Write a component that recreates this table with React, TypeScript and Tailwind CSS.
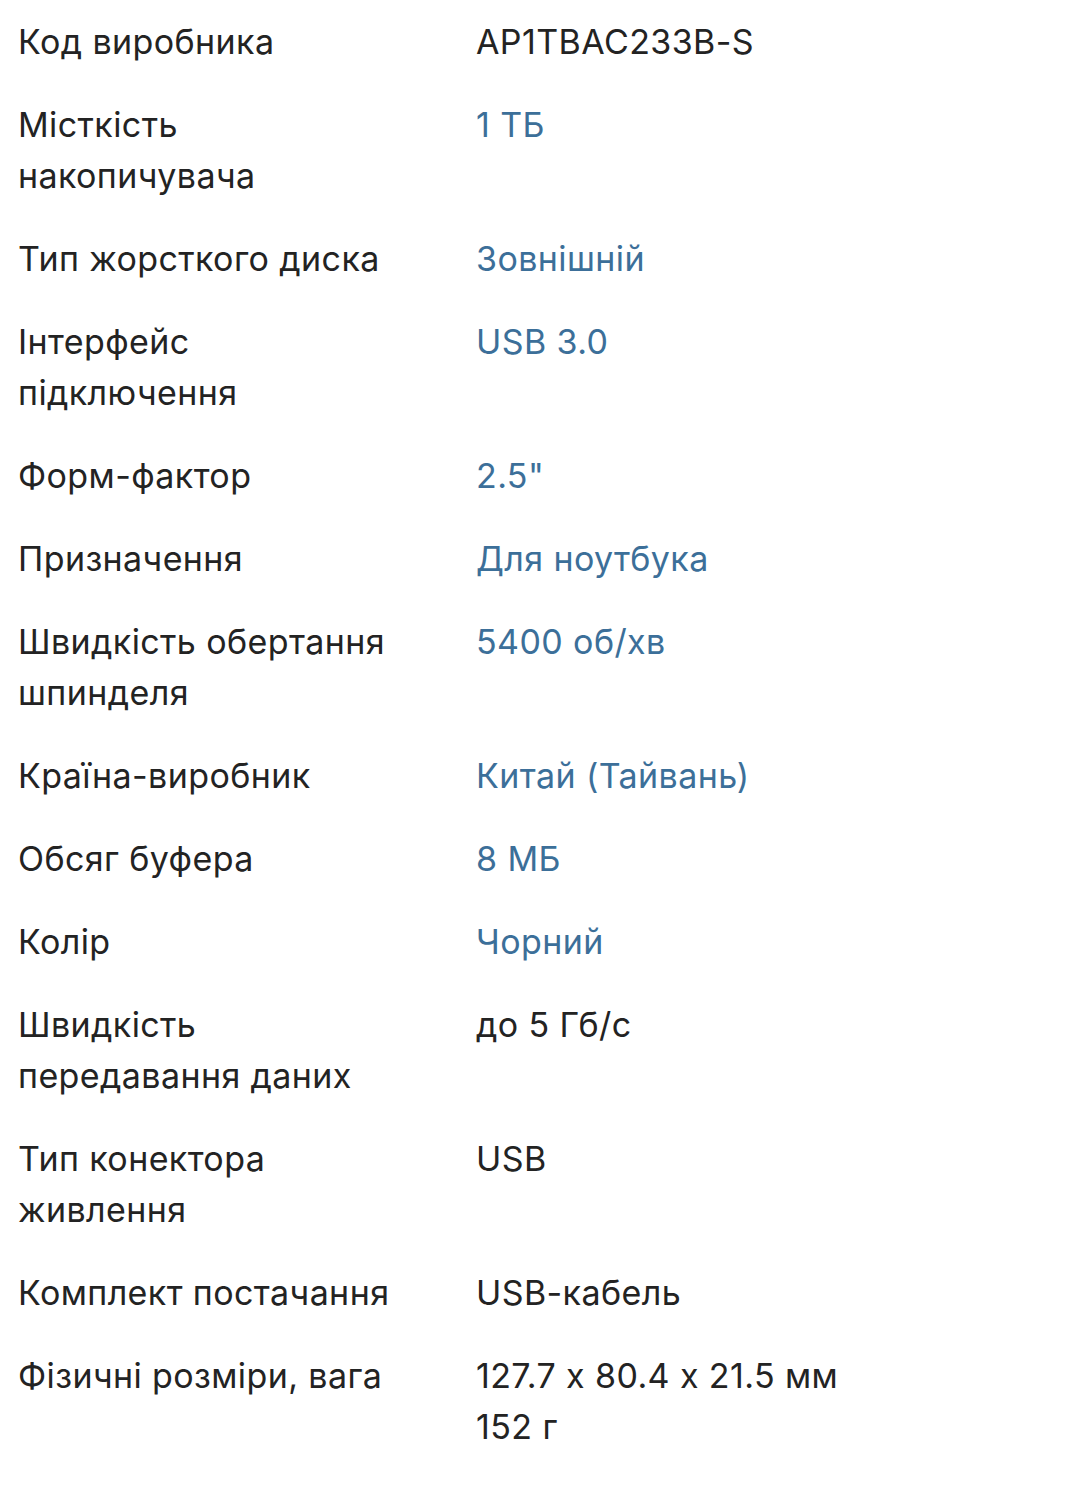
const specs: { label: string; value: string; link?: boolean }[] = [
  { label: "Код виробника", value: "AP1TBAC233B-S" },
  { label: "Місткість накопичувача", value: "1 ТБ", link: true },
  { label: "Тип жорсткого диска", value: "Зовнішній", link: true },
  { label: "Інтерфейс підключення", value: "USB 3.0", link: true },
  { label: "Форм-фактор", value: '2.5"', link: true },
  { label: "Призначення", value: "Для ноутбука", link: true },
  { label: "Швидкість обертання шпинделя", value: "5400 об/хв", link: true },
  { label: "Країна-виробник", value: "Китай (Тайвань)", link: true },
  { label: "Обсяг буфера", value: "8 МБ", link: true },
  { label: "Колір", value: "Чорний", link: true },
  { label: "Швидкість передавання даних", value: "до 5 Гб/с" },
  { label: "Тип конектора живлення", value: "USB" },
  { label: "Комплект постачання", value: "USB-кабель" },
  { label: "Фізичні розміри, вага", value: "127.7 x 80.4 x 21.5 мм\n152 г" },
];

export default function App() {
  return (
    <div className="min-h-[1494px] bg-white font-['Inter',sans-serif] text-[34px] leading-[51px] tracking-[0.4px] text-[#232323] [font-feature-settings:'calt'_0]">
      <dl className="pl-[18px]">
        {specs.map((s) => (
          <div key={s.label} className="grid grid-cols-[458px_1fr] py-4">
            <dt className="max-w-[385px]">{s.label}</dt>
            <dd className={s.link ? "whitespace-pre-line text-[#3c6f99]" : "whitespace-pre-line"}>
              {s.value}
            </dd>
          </div>
        ))}
      </dl>
    </div>
  );
}
